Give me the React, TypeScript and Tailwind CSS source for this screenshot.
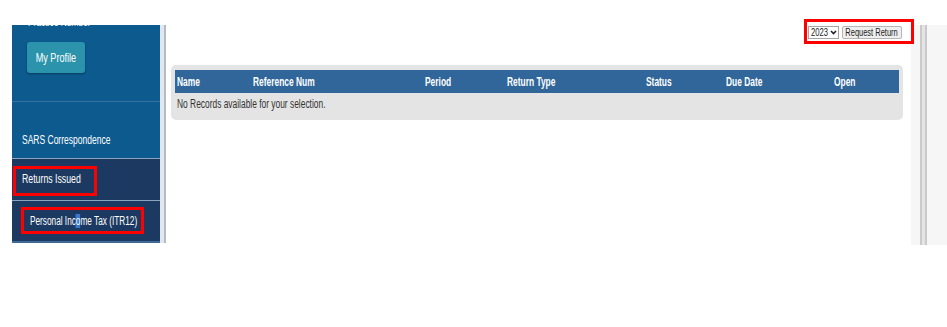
import clsx from 'clsx'

function Sq({ children, className }: { children: React.ReactNode; className?: string }) {
  return (
    <span className={clsx('inline-block origin-left scale-x-[0.7] whitespace-nowrap', className)}>
      {children}
    </span>
  )
}

const columns = [
  { label: 'Name', w: 'w-[76px]' },
  { label: 'Reference Num', w: 'w-[172px]' },
  { label: 'Period', w: 'w-[82px]' },
  { label: 'Return Type', w: 'w-[139px]' },
  { label: 'Status', w: 'w-[80px]' },
  { label: 'Due Date', w: 'w-[108px]' },
  { label: 'Open', w: 'w-[60px]' },
]

function Sidebar() {
  return (
    <aside className="flex h-full w-[154px] shrink-0">
      <div className="flex h-[218px] w-[148px] flex-col overflow-hidden bg-[#0c5a8e] text-white">
        <div className="h-[76px] shrink-0">
          <div className="-mt-[9px] h-[13px] pl-[16px] text-[12px] leading-[13px]">
            <Sq>Practice Number</Sq>
          </div>
          <button className="ml-[15px] mt-[13px] flex h-[31px] w-[58px] items-center justify-center rounded-[3px] bg-[#2b93ab] text-[13px] text-white shadow-[0_1px_2px_rgba(0,0,0,0.35)]">
            <span className="inline-block scale-x-[0.7] whitespace-nowrap">My Profile</span>
          </button>
        </div>
        <div className="h-px shrink-0 bg-[#3572a3]" />
        <div className="h-[56px] shrink-0 pl-[10px] pt-[31px] text-[12.5px] leading-[14px]">
          <Sq className="scale-x-[0.68]">SARS Correspondence</Sq>
        </div>
        <div className="h-px shrink-0 bg-[#8aa3bf]" />
        <div className="flex h-[41px] shrink-0 items-center bg-[#1c3a61] pl-[10px] text-[12.5px]">
          <Sq>Returns Issued</Sq>
        </div>
        <div className="h-px shrink-0 bg-[#8aa3bf]" />
        <div className="flex h-[40px] shrink-0 items-center bg-[#1c3a61] pl-[18px] text-[12.5px]">
          <Sq className="scale-x-[0.66]">
            Personal Inc<span className="bg-[#3a78d0]">o</span>me Tax (ITR12)
          </Sq>
        </div>
        <div className="h-[2px] shrink-0 bg-[#3d6a96]" />
      </div>
      <div className="h-[218px] w-[6px] border-r-2 border-[#b5bbc4] bg-[#e3e6eb]" />
    </aside>
  )
}

function ReturnsTable() {
  return (
    <div className="mt-[26px] h-[55px] rounded-[5px] bg-[#e4e4e4] px-[4px] pt-[5px]">
      <div className="flex h-[23px] items-center bg-[#31669a] pl-[2px] text-[12px] font-bold text-white">
        {columns.map((c) => (
          <div key={c.label} className={c.w}>
            <Sq>{c.label}</Sq>
          </div>
        ))}
      </div>
      <div className="ml-[2px] mt-[5px] text-[12px] leading-[13px] text-[#333]">
        <Sq>No Records available for your selection.</Sq>
      </div>
    </div>
  )
}

export default function App() {
  return (
    <div className="relative h-[327px] w-[947px] overflow-hidden bg-white font-['Liberation_Sans',Arial,sans-serif]">
      <div className="flex h-[245px] pl-[12px] pt-[25px]">
        <Sidebar />

        <main className="w-[745px] pl-[5px] pr-[8px]">
          <div className="mr-[1px] mt-[1px] flex h-[13px] justify-end gap-[3px]">
            <div className="flex h-[13px] w-[31px] items-center border border-[#a5a5a5] bg-white pl-[2px] text-[11px] text-[#222]">
              <div className="w-[19px] shrink-0">
                <span className="inline-block origin-left scale-x-[0.7]">2023</span>
              </div>
              <svg width="7" height="5" viewBox="0 0 7 5" className="shrink-0">
                <path d="M1 1l2.5 2.5L6 1" fill="none" stroke="#222" strokeWidth="1.6" />
              </svg>
            </div>
            <button className="flex h-[13px] w-[60px] items-center justify-center rounded-[2px] border border-[#b5b5b5] bg-[#efefef] text-[11px] text-[#222]">
              <span className="inline-block scale-x-[0.68] whitespace-nowrap">Request Return</span>
            </button>
          </div>
          <ReturnsTable />
        </main>

        <div className="flex h-[220px] w-[36px] bg-[#f6f6f6]">
          <div className="ml-[9px] h-full w-[7px] border-x-2 border-[#cacaca] bg-[#e4e4e4]" />
        </div>
      </div>

      {/* annotation boxes */}
      <div className="absolute left-[13px] top-[166px] h-[30px] w-[84px] border-[3px] border-[#ff0000]" />
      <div className="absolute left-[21px] top-[207px] h-[27px] w-[123px] border-[3px] border-[#ff0000]" />
      <div className="absolute left-[804px] top-[19px] h-[25px] w-[110px] border-[3px] border-[#ff0000]" />
    </div>
  )
}
